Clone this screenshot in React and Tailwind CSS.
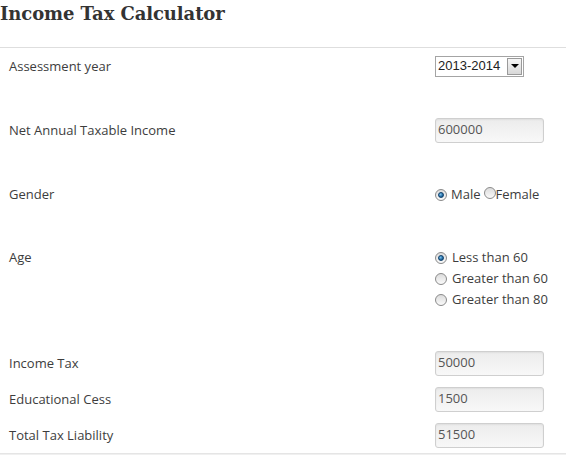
import React from 'react';

function Radio({ checked }) {
  return (
    <span className="inline-flex w-[12px] h-[12px] rounded-full border border-[#8a8a8a] bg-gradient-to-b from-[#dcdcdc] to-[#fafafa] items-center justify-center shrink-0">
      {checked && (
        <span className="w-[6px] h-[6px] rounded-full bg-[radial-gradient(circle_at_35%_35%,#7cc4f0,#1a5f96_70%)] border border-[#0d3f6b]" />
      )}
    </span>
  );
}

function TextBox({ value }) {
  return (
    <div className="w-[109px] h-[25px] rounded-[3px] border border-[#cfcfcf] bg-gradient-to-b from-[#ececec] to-[#f8f8f8] shadow-[inset_0_1px_2px_rgba(0,0,0,0.06)] flex items-center pl-[2px] text-[13px] text-[#555]">
      {value}
    </div>
  );
}

function Row({ label, children }) {
  return (
    <div className="flex items-center h-[36px]">
      <div className="w-[435px] pl-[9px] pt-[2px]">{label}</div>
      <div className="flex-1">{children}</div>
    </div>
  );
}

export default function App() {
  return (
    <div className="w-[566px] h-[455px] bg-white text-[#3d3d3d] font-['Open_Sans',sans-serif] text-[13px] overflow-hidden">
      <h1 className="font-['DejaVu_Serif',serif] font-bold text-[18px] text-[#333] leading-none pt-[5px] h-[47px] tracking-[-0.1px]">
        Income Tax Calculator
      </h1>
      <div className="border-t border-[#dedede] shadow-[0_1px_1px_rgba(0,0,0,0.06)] border-b border-b-[#e5e5e5]">
        <Row label="Assessment year">
          <div className="w-[89px] h-[21px] border border-[#a4a4a4] flex items-center justify-between font-['Liberation_Sans',sans-serif] text-[13px] text-[#222] pl-[2px] pr-[1px]">
            <span>2013-2014</span>
            <span className="w-[15px] h-[17px] border border-[#9a9a9a] bg-gradient-to-b from-[#f6f6f6] to-[#d8d8d8] flex items-center justify-center">
              <span className="w-0 h-0 border-l-[4px] border-r-[4px] border-t-[4px] border-l-transparent border-r-transparent border-t-black" />
            </span>
          </div>
        </Row>
        <div className="h-[28px]" />
        <Row label="Net Annual Taxable Income">
          <TextBox value="600000" />
        </Row>
        <div className="h-[28px]" />
        <Row label="Gender">
          <div className="flex items-center pt-[2px]">
            <Radio checked />
            <span className="ml-[4px]">Male</span>
            <span className="ml-[3px]"><Radio /></span>
            <span>Female</span>
          </div>
        </Row>
        <div className="h-[28px]" />
        <div className="flex pt-[7px] h-[105px]">
          <div className="w-[435px] pl-[9px] leading-[21px]">Age</div>
          <div className="flex-1 flex flex-col">
            {['Less than 60', 'Greater than 60', 'Greater than 80'].map((t, i) => (
              <div key={t} className="flex items-center h-[21px] gap-[5px]">
                <Radio checked={i === 0} />
                <span>{t}</span>
              </div>
            ))}
          </div>
        </div>
        <Row label="Income Tax">
          <TextBox value="50000" />
        </Row>
        <Row label="Educational Cess">
          <TextBox value="1500" />
        </Row>
        <Row label="Total Tax Liability">
          <TextBox value="51500" />
        </Row>
      </div>
    </div>
  );
}
